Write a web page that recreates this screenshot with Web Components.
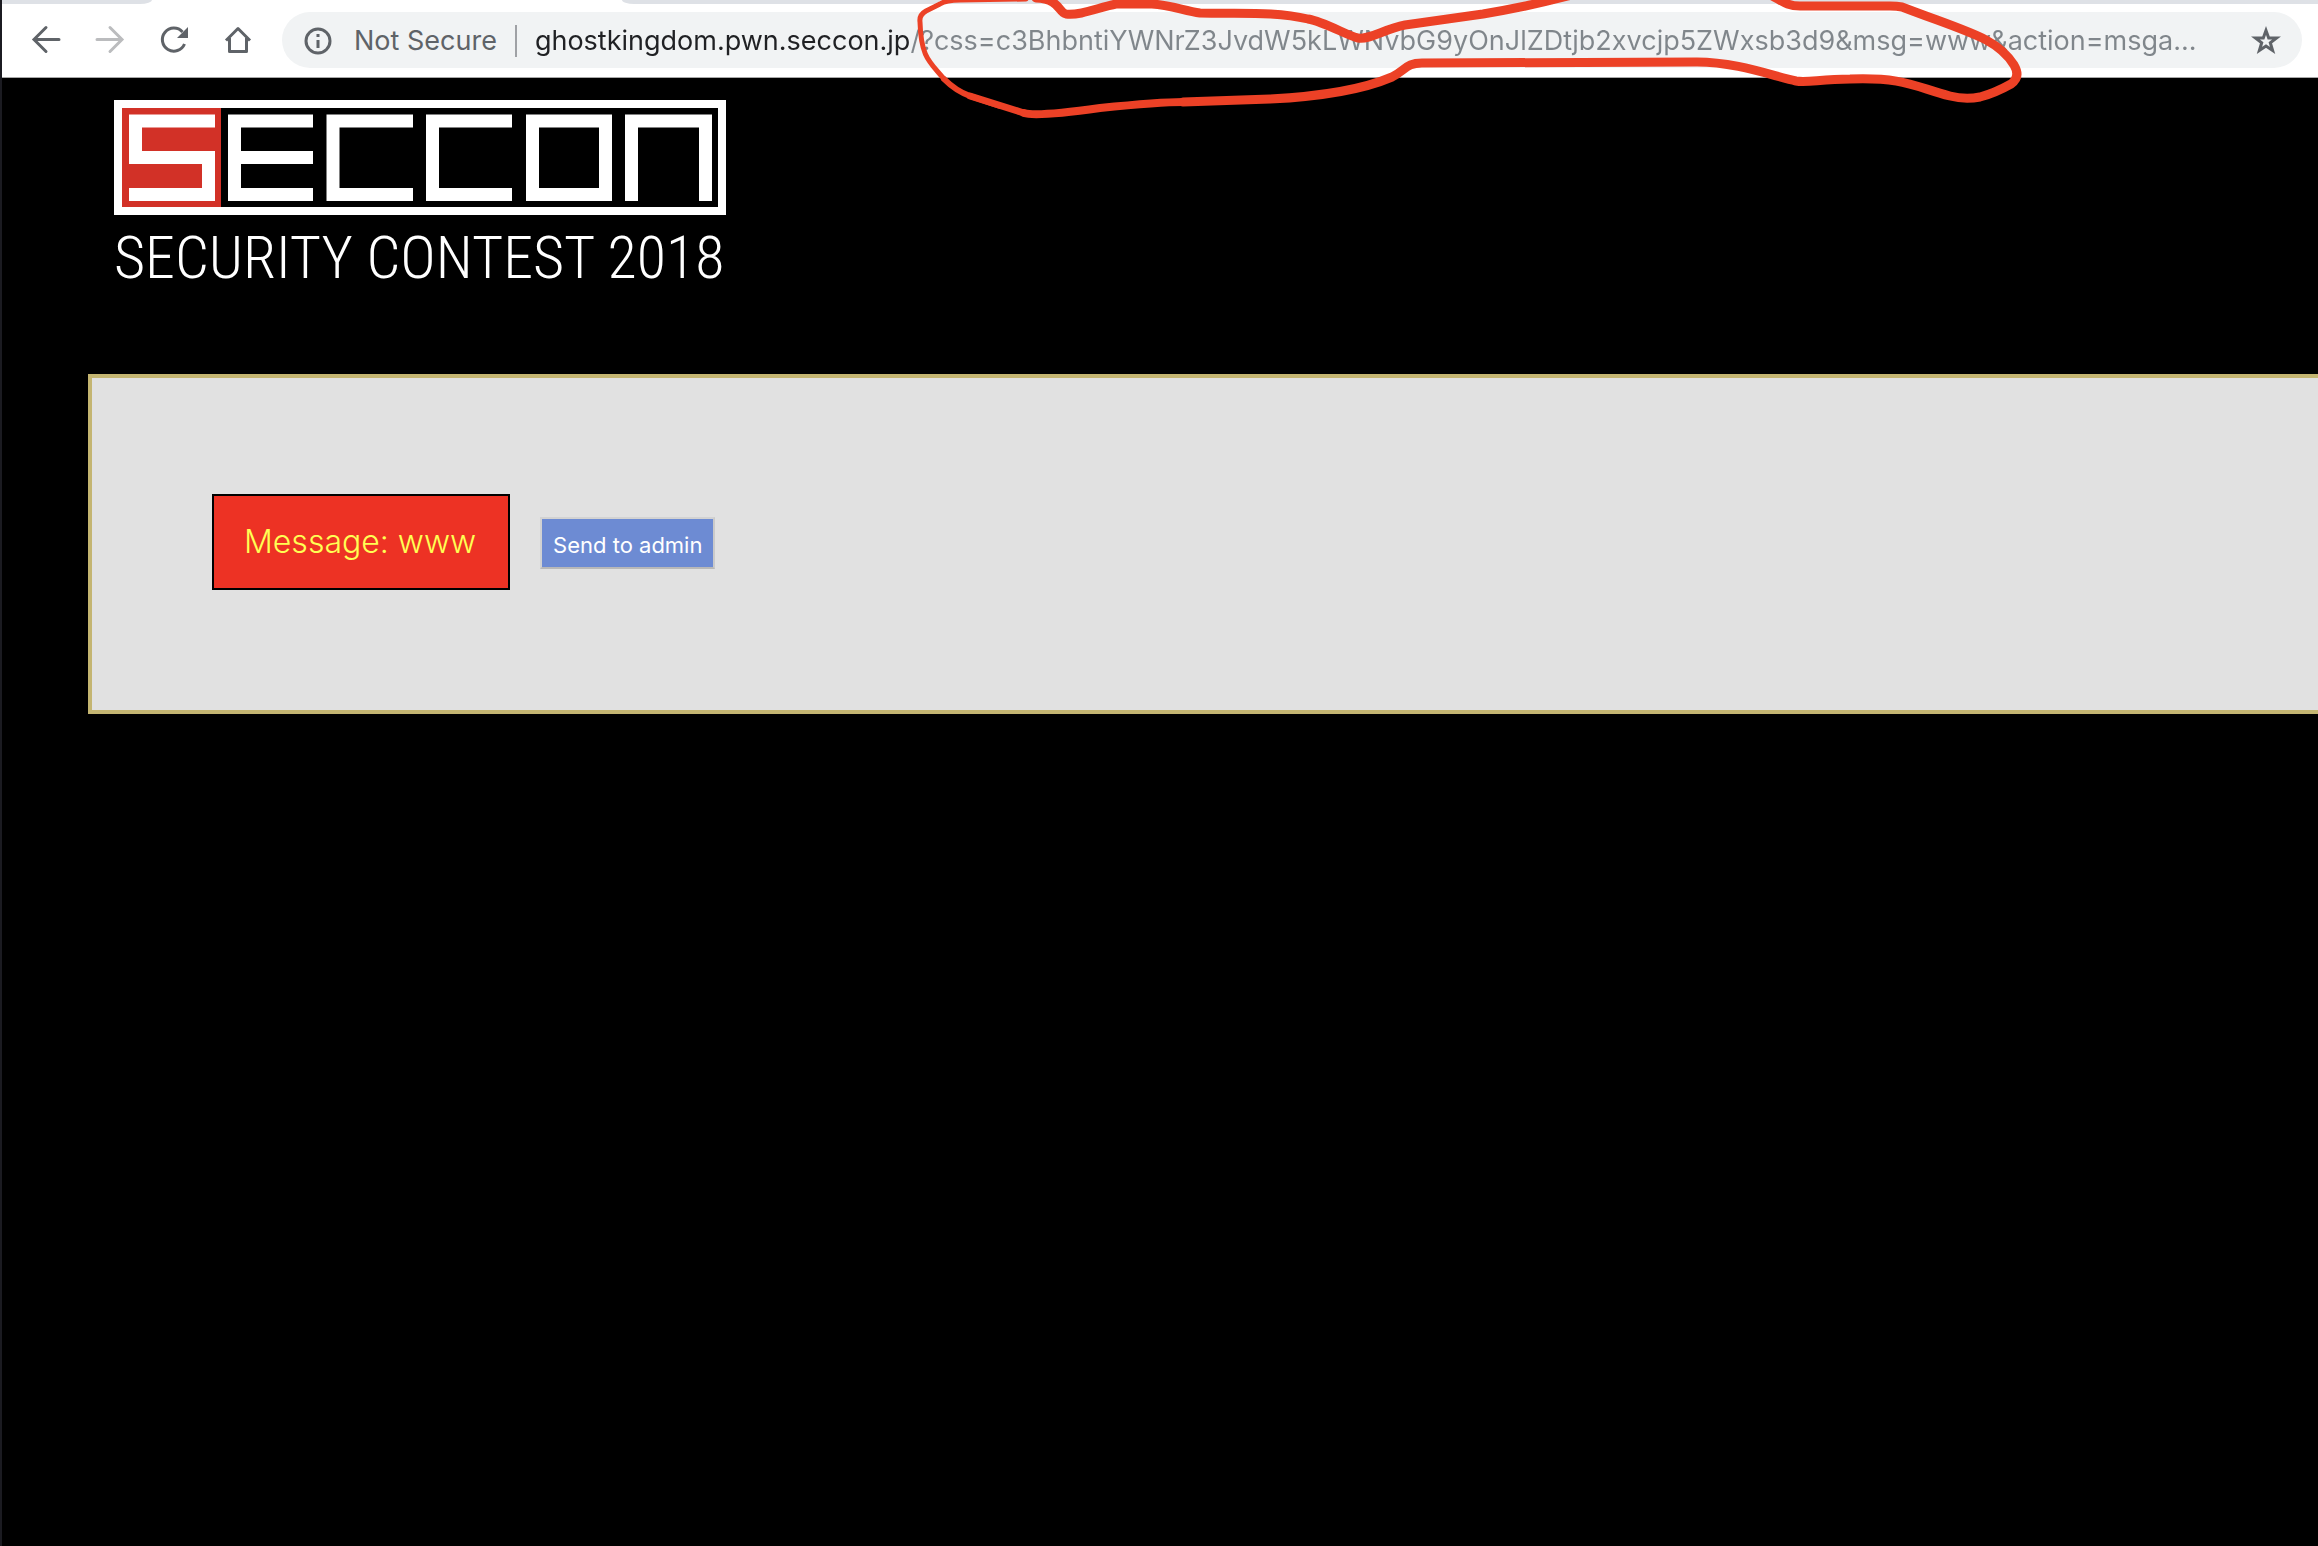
<!DOCTYPE html>
<html lang="en">
<head>
<meta charset="utf-8">
<title>Ghost Kingdom</title>
<style>
  html, body { margin: 0; min-height: 100%; background: #000; }
  body { font-family: Inter, "Liberation Sans", sans-serif; overflow-x: hidden; }
</style>
</head>
<body>
<browser-window>
  <tab-strip slot="chrome"></tab-strip>
  <nav-bar slot="chrome"></nav-bar>
  <contest-logo></contest-logo>
  <message-panel>
    <message-box>Message: www</message-box>
    <send-button>Send to admin</send-button>
  </message-panel>
  <red-marker slot="overlay"></red-marker>
</browser-window>

<script>
const define = (name, html) => {
  const template = document.createElement('template');
  template.innerHTML = html;
  customElements.define(name, class extends HTMLElement {
    constructor() {
      super();
      this.attachShadow({ mode: 'open' }).append(template.content.cloneNode(true));
    }
  });
};

define('browser-window', `
  <style>
    :host { display: block; position: relative; box-sizing: border-box; min-height: 100vh; border-left: 2px solid #1b1b21; background: #000; overflow: hidden; }
    header { background: #fff; border-bottom: 1px solid #a8a8a8; }
    main { padding: 22px 0 0 86px; }
  </style>
  <header><slot name="chrome"></slot></header>
  <main><slot></slot></main>
  <slot name="overlay"></slot>
`);

define('tab-strip', `
  <style>
    :host { display: flex; justify-content: space-between; height: 4px; }
    .before { width: 150px; background: #dee1e6; border-bottom-right-radius: 12px 4px; }
    .active { width: 470px; }
    .after { flex: 1; background: #dee1e6; border-bottom-left-radius: 12px 4px; }
  </style>
  <div class="before"></div><div class="active"></div><div class="after"></div>
`);

define('nav-bar', `
  <style>
    :host { display: flex; align-items: center; padding: 8px 16px 9px 26px; color: #5f6368; }
    button { display: flex; padding: 0; border: 0; background: none; color: inherit; }
    svg { display: block; width: 36px; height: 36px; fill: none; stroke: currentColor; }
    nav { display: flex; gap: 28px; width: 254px; }
    button:disabled { color: #bbbcbe; }
    form { flex: 1; display: flex; align-items: center; box-sizing: border-box; height: 56px; padding: 2px 18px 0; border-radius: 28px; background: #f1f3f4; min-width: 0; }
    label { font-size: 27px; line-height: 36px; margin-left: 18px; padding-right: 18px; white-space: nowrap; }
    .rule { width: 2px; height: 32px; background: #9fa1a5; }
    input { flex: 1; min-width: 0; margin: 0 18px; padding: 0; border: 0; outline: 0; font: 27px/36px Inter, "Liberation Sans", sans-serif;
      background: linear-gradient(to right, #202124 376px, #80868b 376px); -webkit-background-clip: text; background-clip: text; -webkit-text-fill-color: transparent; }
  </style>
  <nav>
    <button aria-label="Back"><svg viewBox="0 0 36 36" stroke-width="3"><path d="M31 17.500H7M18 5.500 6 17.500 18 29.500" stroke-linecap="round"/></svg></button>
    <button aria-label="Forward" disabled><svg viewBox="0 0 36 36" stroke-width="3"><path d="M5 17.500H29M18 5.500 30 17.500 18 29.500" stroke-linecap="round"/></svg></button>
    <button aria-label="Reload"><svg viewBox="0 0 36 36" stroke-width="3"><path d="M28.500 22A11.500 11.500 0 1 1 26.500 10"/><path d="M32 5V16H21Z" fill="currentColor" stroke="none"/></svg></button>
    <button aria-label="Home"><svg viewBox="0 0 36 36" stroke-width="3"><path d="M6 18.500 18 6.500 30 18.500M9.500 16V29.500H26.500V16" stroke-linejoin="round"/></svg></button>
  </nav>
  <form onsubmit="return false">
    <svg viewBox="0 0 36 36" stroke-width="3" aria-hidden="true"><circle cx="18" cy="18" r="12"/><path d="M18 17V25M18 11V14"/></svg>
    <label for="url">Not Secure</label>
    <div class="rule"></div>
    <input id="url" type="text" spellcheck="false" value="ghostkingdom.pwn.seccon.jp/?css=c3BhbntiYWNrZ3JvdW5kLWNvbG9yOnJlZDtjb2xvcjp5ZWxsb3d9&amp;msg=www&amp;action=msga...">
    <button type="button" aria-label="Bookmark"><svg viewBox="0 0 36 36" stroke-width="3"><path d="M18 7.500 20.700 15H28.500L22.300 19.700 24.600 27.500 18 23 11.400 27.500 13.700 19.700 7.500 15H15.300Z"/></svg></button>
  </form>
`);

define('contest-logo', `
  <style>
    :host { display: block; width: 612px; margin-left: 26px; color: #fff; }
    svg { display: block; width: 612px; height: 115px; }
    p { margin: 0; font: 300 60px/86px "Roboto Condensed", "Liberation Sans Narrow", sans-serif; white-space: nowrap; }
  </style>
  <svg viewBox="0 0 612 115" fill="none" stroke="#fff" role="img" aria-label="SECCON">
    <path d="M8 8H107V107H8Z" fill="#d23127" stroke="none"/>
    <path d="M4 4H608V111H4Z" stroke-width="8"/>
    <path stroke-width="13" d="M101 21H21.500V57.500H94.500V94.500H15M199 21H120.500V94.500H199M120.500 57.500H199M299 21H219V94.500H299M398 21H318.500V94.500H398M418.500 21H491.500V94.500H418.500ZM418.500 14.500V101M517.500 101V21H591.500V101"/>
  </svg>
  <p>SECURITY CONTEST 2018</p>
`);

define('message-panel', `
  <style>
    :host { display: flex; align-items: baseline; gap: 30px; margin: 73px -4px 0 0; padding: 116px 120px 120px; border: 4px solid #c4b571; background: #e1e1e1; }
  </style>
  <slot></slot>
`);

define('message-box', `
  <style>
    :host { display: block; padding: 26px 32px 26px 30px; border: 2px solid #000; background: #ed3224; color: #ffff54; font-size: 32px; line-height: 40px; font-weight: 300; }
  </style>
  <slot></slot>
`);

define('send-button', `
  <style>
    :host { display: block; }
    button { display: block; height: 52px; padding: 4px 11px 0; border: 2px solid; border-color: #d2d2d2 #cacaca #b8b8b8 #d2d2d2; background: #6d8bd3; color: #fff; font: 22px/44px Inter, "Liberation Sans", sans-serif; }
  </style>
  <button type="button"><slot></slot></button>
`);

define('red-marker', `
  <style>
    :host { position: absolute; top: 0; left: -2px; width: 2318px; height: 130px; pointer-events: none; }
    svg { display: block; width: 2318px; height: 130px; fill: none; stroke: #ec4126; stroke-linecap: round; stroke-linejoin: round; }
  </style>
  <svg viewBox="0 0 2318 130" aria-hidden="true">
    <path stroke-width="5" d="M1026-1 960 0Q946 0 940 4L926 11Q919 15 920 22C921 58 930 62 944 79"/>
    <path stroke-width="6" d="M944 79Q956 91 970 96L1000 106"/>
    <path stroke-width="7" d="M970 96 1024 113"/>
    <path stroke-width="8" d="M1024 113Q1036 117 1100 108C1150 103 1180 102 1183 102"/>
    <path stroke-width="9" d="M1183 102 1270 99Q1350 95 1392 77C1406 70 1406 63 1422 63L1697 62C1735 62 1770 75 1796 81C1808 83 1820 79 1850 79C1905 77 1915 87 1950 96Q1965 100 1980 97Q1995 93 2011 84Q2021 77 2014 65C1997 38 1970 33 1902 7Q1897 6 1890 6L1800 6C1785 6 1780-1 1770-5M1568-4Q1530 6 1483 14L1405 25C1384 29 1370 40 1358 38C1348 36 1325 22 1308 19C1275 11 1240 14 1200 13C1185 11 1170 5 1152 4L1116 4C1100 7 1080 16 1066 14C1058 12 1060-1 1036-2"/>
  </svg>
`);
</script>
</body>
</html>
